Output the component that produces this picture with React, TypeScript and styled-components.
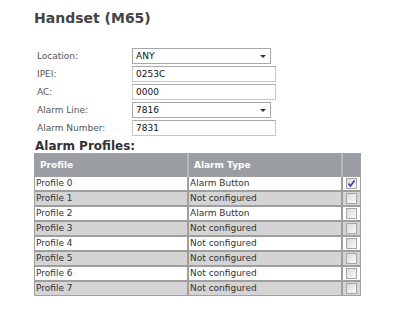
import React from 'react'
import styled, { createGlobalStyle } from 'styled-components'

const GlobalStyle = createGlobalStyle`
    body {
        margin: 0;
        background: #ffffff;
        font-family: "DejaVu Sans", Verdana, sans-serif;
        font-size: 9px;
        color: #333;
    }
`

const fields = [
    { label: 'Location:', value: 'ANY', select: true },
    { label: 'IPEI:', value: '0253C' },
    { label: 'AC:', value: '0000' },
    { label: 'Alarm Line:', value: '7816', select: true },
    { label: 'Alarm Number:', value: '7831' },
]

const profiles = [
    { name: 'Profile 0', type: 'Alarm Button', checked: true },
    { name: 'Profile 1', type: 'Not configured' },
    { name: 'Profile 2', type: 'Alarm Button' },
    { name: 'Profile 3', type: 'Not configured' },
    { name: 'Profile 4', type: 'Not configured' },
    { name: 'Profile 5', type: 'Not configured' },
    { name: 'Profile 6', type: 'Not configured' },
    { name: 'Profile 7', type: 'Not configured' },
]

const App = () => {
    return (
        <Page>
            <GlobalStyle />
            <Title>Handset (M65)</Title>
            <Form>
                {fields.map(f => (
                    <React.Fragment key={f.label}>
                        <Label>{f.label}</Label>
                        {f.select ? (
                            <Select>
                                <span>{f.value}</span>
                                <Arrow />
                            </Select>
                        ) : (
                            <TextBox>{f.value}</TextBox>
                        )}
                    </React.Fragment>
                ))}
            </Form>
            <SubTitle>Alarm Profiles:</SubTitle>
            <Table>
                <thead>
                    <tr>
                        <Th>Profile</Th>
                        <Th>Alarm Type</Th>
                        <Th />
                    </tr>
                </thead>
                <tbody>
                    {profiles.map((p, i) => (
                        <Row key={p.name} odd={i % 2 === 1}>
                            <Td>{p.name}</Td>
                            <Td>{p.type}</Td>
                            <CheckCell>
                                <Check checked={!!p.checked}>
                                    {p.checked && (
                                        <svg width="9" height="9" viewBox="0 0 9 9">
                                            <path d="M1.5 4.5 L3.5 7 L7.5 1.5" stroke="#2a3fa8" strokeWidth="1.6" fill="none" />
                                        </svg>
                                    )}
                                </Check>
                            </CheckCell>
                        </Row>
                    ))}
                </tbody>
            </Table>
        </Page>
    )
}

const Page = styled.div`
    padding: 9px 0 0 34px;
    width: 330px;
`

const Title = styled.h1`
    margin: 0 0 21px 0;
    font-size: 14px;
    font-weight: bold;
    color: #444;
    line-height: 18px;
`

const Form = styled.div`
    display: grid;
    grid-template-columns: 95px 144px;
    row-gap: 2px;
    align-items: center;
    padding-left: 3px;
`

const Label = styled.div`
    color: #555;
    line-height: 16px;
`

const TextBox = styled.div`
    height: 14px;
    border: 1px solid #c8c8c8;
    border-top-color: #a8a8a8;
    padding: 0 3px;
    line-height: 14px;
    color: #111;
    background: #fff;
`

const Select = styled.div`
    width: 131px;
    height: 14px;
    border: 1px solid #a8a8a8;
    padding: 0 3px;
    line-height: 14px;
    color: #111;
    display: flex;
    justify-content: space-between;
    align-items: center;
    box-sizing: content-box;
`

const Arrow = styled.span`
    width: 0;
    height: 0;
    border-left: 3px solid transparent;
    border-right: 3px solid transparent;
    border-top: 3px solid #333;
    margin-right: 1px;
`

const SubTitle = styled.h2`
    margin: 3px 0 0 1px;
    font-size: 12px;
    font-weight: bold;
    color: #333;
    line-height: 14px;
`

const Table = styled.table`
    border-collapse: collapse;
    width: 327px;
    border: 1px solid #a0a0a0;
`

const Th = styled.th`
    background: #9a9da1;
    color: #fff;
    text-align: left;
    font-weight: bold;
    height: 21px;
    padding: 0 5px;
    border-right: 2px solid #b8babd;
    &:first-child { width: 142px; }
    &:nth-child(2) { width: 142px; }
    &:last-child { border-right: none; }
`

const Row = styled.tr<{ odd: boolean }>`
    background: ${p => p.odd ? '#d4d4d4' : '#ffffff'};
    border-top: 2px solid #9e9e9e;
`

const Td = styled.td`
    height: 13px;
    padding: 0 1px;
    line-height: 13px;
    color: #333;
    border-right: 2px solid #9e9e9e;
`

const CheckCell = styled.td`
    padding: 0 0 0 3px;
    line-height: 0;
`

const Check = styled.span<{ checked: boolean }>`
    display: inline-flex;
    align-items: center;
    justify-content: center;
    width: 9px;
    height: 9px;
    border: 1px solid #a6a6a6;
    background: linear-gradient(135deg, #d9d9d9, #fafafa);
`

export default App
